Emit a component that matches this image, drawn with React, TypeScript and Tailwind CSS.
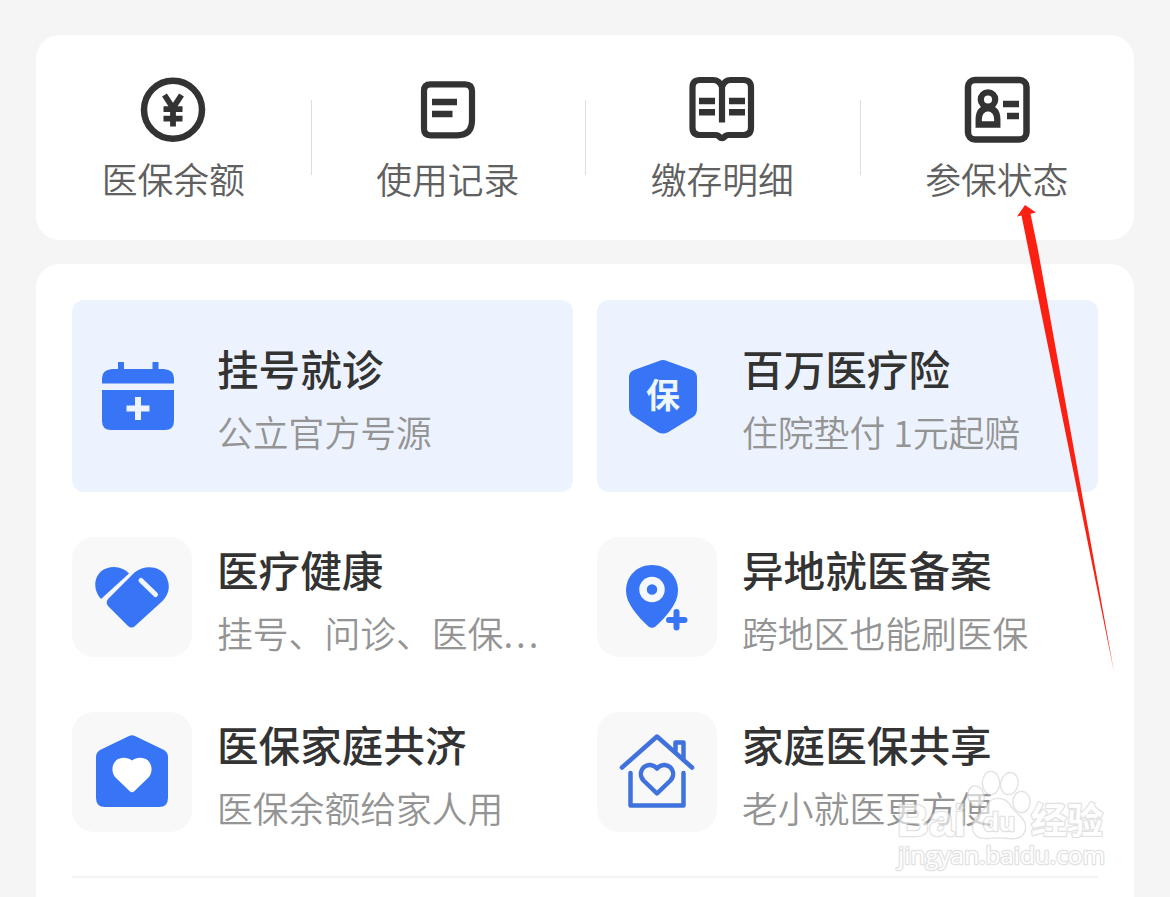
import React from "react";

interface EntryProps {
  label: string;
  icon: React.ReactNode;
}

interface ServiceProps {
  title: string;
  text: string;
  more?: boolean;
  icon: React.ReactNode;
}

const BLUE = "#3875f6";

const BalanceIcon = () => (
  <svg width="68" height="68" viewBox="139 76 68 68" fill="none" stroke="#333">
    <circle cx="173" cy="109.700" r="29" strokeWidth="6.500" />
    <path
      d="M164.500 95l8.500 13 8.500-13M173 106v20.500M163.500 109.200h19M163.500 118.700h19"
      strokeWidth="5.800"
    />
  </svg>
);

const RecordIcon = () => (
  <svg width="68" height="68" viewBox="414 76 68 68" fill="none" stroke="#333">
    <path
      d="M430.500 84.300h34.500q7 0 7 7v29q0 15-15 15h-26.500q-6.500 0-6.500-6.500v-38q0-6.500 6.500-6.500z"
      strokeWidth="6.200"
    />
    <path d="M432 102h25M432 114h20.500" strokeWidth="6.500" />
  </svg>
);

const DetailIcon = () => (
  <svg width="68" height="68" viewBox="688 76 68 68" fill="none" stroke="#333">
    <path
      d="M722 122.500V87q-2.500-7-9-7h-13q-7.500 0-7.500 7.500v40q0 7.500 7.500 7.500h15.500q3 0 3.500 1.500 3 3 6 0 1-1.500 3.500-1.500h15q7.500 0 7.500-7.500v-40q0-7.500-7.500-7.500h-13q-6 0-8.500 7"
      strokeWidth="6.200"
    />
    <path
      d="M699 101h16M699 112.300h16M729 101h16M729 112.300h16"
      strokeWidth="6.500"
    />
  </svg>
);

const StatusIcon = () => (
  <svg width="68" height="68" viewBox="963 76 68 68" fill="none" stroke="#333">
    <rect x="968" y="80" width="58.500" height="59.500" rx="7" strokeWidth="6.500" />
    <circle cx="988" cy="99.500" r="7.200" strokeWidth="6.300" />
    <path
      d="M978.700 124.500v-5q0-10.500 9.300-11.500 9.300 1 9.300 11.500v5z"
      strokeWidth="6.300"
    />
    <path d="M1003 104h16M1007 116h12" strokeWidth="6.500" />
  </svg>
);

const CalendarIcon = () => (
  <svg width="120" height="120" viewBox="78 336 120 120" fill={BLUE}>
    <path d="M118 362h6v7h28.500v-7h6v7h5.500q10 1 10 9v5.500h-72v-5.500q0-8 10-9h6z" />
    <path d="M102 390h72v31q0 9-9 9h-54q-9 0-9-9z" />
    <path
      d="M138 397v23M126.500 408.500h23"
      stroke="#eef4ff"
      strokeWidth="6"
    />
  </svg>
);

const ShieldIcon = () => (
  <svg width="120" height="120" viewBox="603 336 120 120">
    <path
      d="M659 361q4-2 8 0l25 9q5 2 5 7.500v31.500q0 5-4 8l-24.500 15q-5.500 3-11 0l-24.500-16q-4-3-4-8v-31q0-5 5-7z"
      fill={BLUE}
    />
    <text
      x="663"
      y="408"
      fontSize="34"
      fontWeight="700"
      textAnchor="middle"
      fill="#eef6ff"
    >
      保
    </text>
  </svg>
);

const HealthIcon = () => (
  <svg width="120" height="120" viewBox="72 537 120 120" fill={BLUE}>
    <path d="M101 599C90 587 95 567 114 567q9 0 15 6.500z" />
    <path d="M108.500 598.500l26-26C145 564 160 566 166 576q7 14-3.500 25L135 626q-3.500 3-7 0l-19.500-19.500q-3.500-4 0-8z" />
    <path
      d="M141 580.500l14.500 14"
      stroke="#f2f7ff"
      strokeWidth="5"
      strokeLinecap="round"
    />
  </svg>
);

const PinIcon = () => (
  <svg width="120" height="120" viewBox="597 537 120 120" fill={BLUE}>
    <path d="M652 565c15 0 26 11 26 26 0 12-11 25-22.500 35.500q-3.500 2.500-7 0C637 616 626 603 626 591c0-15 11-26 26-26z" />
    <circle cx="652" cy="589.500" r="9" fill="none" stroke="#f5f9ff" strokeWidth="7.500" />
    <path
      d="M676.500 612v15.500M669 620h15.500"
      stroke={BLUE}
      strokeWidth="6"
      strokeLinecap="round"
    />
  </svg>
);

const FamilyIcon = () => (
  <svg width="120" height="120" viewBox="72 712 120 120">
    <path
      d="M129 736q3-1.500 6 0l29 14q4 2.500 4 7v41q0 9-9 9h-54q-9 0-9-9v-41q0-4.500 4-7z"
      fill={BLUE}
    />
    <path
      d="M132 760.500c5-4 12-3.500 16 0 5 5 4.500 13 0 17.500l-14 13.500q-2 1.500-4 0L116 778c-4.500-4.500-5-12.500 0-17.500 4-3.500 11-4 16 0z"
      fill="#fff"
    />
  </svg>
);

const ShareIcon = () => (
  <svg
    width="120"
    height="120"
    viewBox="597 712 120 120"
    fill="none"
    stroke="#3f72dc"
    strokeWidth="4.500"
    strokeLinecap="round"
    strokeLinejoin="round"
  >
    <path d="M622 767.500l35-31 35 31" />
    <path d="M675.500 751v-8.500h8v17" />
    <path d="M630.500 773v32.500h53V773" />
    <path d="M657 768.500c-4-4.500-9.500-4.500-13-1.500-4 4-4 9.500-.5 13.500l13.500 13 13.500-13c3.500-4 3.500-9.500-.5-13.500-3.500-3-9-3-13 1.500z" />
  </svg>
);

const Watermark = () => (
  <svg
    className="absolute left-[890px] top-[765px] opacity-60"
    width="224"
    height="112"
    viewBox="890 765 224 112"
    fill="#ffffff"
    stroke="#cfcfcf"
    strokeWidth="2.600"
    strokeLinejoin="round"
  >
    <g className="[paint-order:stroke]">
      <text x="897" y="836" fontSize="44" fontWeight="700" textLength="69" lengthAdjust="spacingAndGlyphs" className="font-['Liberation_Sans']">
        Bai
      </text>
      <ellipse cx="976" cy="796" rx="7.500" ry="9.500" transform="rotate(-15 976 796)" />
      <ellipse cx="991" cy="783" rx="8" ry="11" />
      <ellipse cx="1009.500" cy="783.500" rx="8" ry="10.500" transform="rotate(12 1009 783)" />
      <ellipse cx="1021.500" cy="802" rx="8" ry="10" />
      <path d="M998 799c8 0 11 5 15 11 5 6 12 9 12 17 0 9-8 12-15 11-8-1-16-1-24 0-8 0-13-4-13-12s8-12 12-17c4-6 6-10 13-10z" />
      <text x="983" y="831" fontSize="26" fontWeight="700" textLength="32" lengthAdjust="spacingAndGlyphs" className="font-['Liberation_Sans']">
        du
      </text>
      <text x="1031" y="834" fontSize="36" fontWeight="700" textLength="72" lengthAdjust="spacingAndGlyphs">
        经验
      </text>
      <text x="898" y="864" fontSize="24" textLength="207" lengthAdjust="spacingAndGlyphs" className="font-['Open_Sans']">
        jingyan.baidu.com
      </text>
    </g>
  </svg>
);

const Arrow = () => (
  <svg
    className="absolute left-[1010px] top-[200px]"
    width="110"
    height="480"
    viewBox="1010 200 110 480"
    fill="#fc2012"
  >
    <path d="M1025 205l11 7.500-5.500 1.200 7.500 36.300L1114 672 1028.500 250l-7-34.500-4.500 1z" />
  </svg>
);

const entries: EntryProps[] = [
  { label: "医保余额", icon: <BalanceIcon /> },
  { label: "使用记录", icon: <RecordIcon /> },
  { label: "缴存明细", icon: <DetailIcon /> },
  { label: "参保状态", icon: <StatusIcon /> },
];

const featured: ServiceProps[] = [
  { title: "挂号就诊", text: "公立官方号源", icon: <CalendarIcon /> },
  { title: "百万医疗险", text: "住院垫付 1元起赔", icon: <ShieldIcon /> },
];

const services: ServiceProps[] = [
  { title: "医疗健康", text: "挂号、问诊、医保", more: true, icon: <HealthIcon /> },
  { title: "异地就医备案", text: "跨地区也能刷医保", icon: <PinIcon /> },
  { title: "医保家庭共济", text: "医保余额给家人用", icon: <FamilyIcon /> },
  { title: "家庭医保共享", text: "老小就医更方便", icon: <ShareIcon /> },
];

const ServiceText = ({
  title,
  text,
  more,
}: {
  title: string;
  text: string;
  more?: boolean;
}) => (
  <div className="flex flex-col gap-6 pt-[3px] whitespace-nowrap">
    <h2 className="text-[41.6px] leading-[42px] font-medium text-[#333]">
      {title}
    </h2>

    <p className="text-[35.8px] leading-9 font-[350] text-[#949494]">
      {text}
      {more && <span className="tracking-[3px]">...</span>}
    </p>
  </div>
);

const App = () => {
  return (
    <div className="relative w-[1170px] h-[897px] overflow-hidden bg-[#f5f5f5] px-9 pt-[35px] font-['Noto_Sans_CJK_SC',sans-serif]">
      <div className="grid grid-cols-4 h-[205px] rounded-3xl bg-white">
        {entries.map((entry, i) => (
          <div key={entry.label} className="flex">
            <div className="flex-1 flex flex-col items-center pt-[41px]">
              {entry.icon}

              <p className="mt-4 text-[35.8px] leading-9 font-[350] text-[#606060]">
                {entry.label}
              </p>
            </div>

            {i < 3 && <div className="w-px h-[75px] mt-[65px] -mr-px bg-[#dedede]" />}
          </div>
        ))}
      </div>

      <div className="mt-6 h-[660px] rounded-3xl bg-white px-9 pt-9">
        <div className="grid grid-cols-2 gap-6">
          {featured.map((item) => (
            <div
              key={item.title}
              className="flex items-center h-48 rounded-xl bg-[#edf3fe] pl-1.5"
            >
              {item.icon}

              <div className="ml-[19px]">
                <ServiceText title={item.title} text={item.text} />
              </div>
            </div>
          ))}
        </div>

        <div className="mt-[45px] grid grid-cols-2 gap-x-6 gap-y-[55px]">
          {services.map((item) => (
            <div key={item.title} className="flex items-center h-[120px]">
              <div className="rounded-[22px] bg-[#f8f8f8]">{item.icon}</div>

              <div className="ml-[25px] pt-px">
                <ServiceText title={item.title} text={item.text} more={item.more} />
              </div>
            </div>
          ))}
        </div>

        <div className="mt-11 h-0.5 bg-[#f4f4f4]" />
      </div>

      <Watermark />
      <Arrow />
    </div>
  );
};

export default App;
